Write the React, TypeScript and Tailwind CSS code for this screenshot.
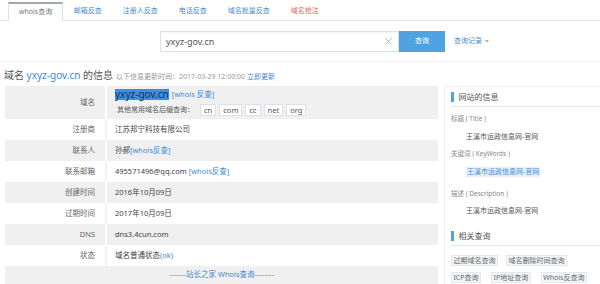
const tabs = ['邮箱反查', '注册人反查', '电话反查', '域名批量反查']

const rows: { label: string; value: React.ReactNode }[] = [
  { label: '注册商', value: '江苏邦宁科技有限公司' },
  {
    label: '联系人',
    value: (
      <>
        孙郝 <span className="text-[#3e8ad6]">[whois反查]</span>
      </>
    ),
  },
  {
    label: '联系邮箱',
    value: (
      <>
        495571496@qq.com <span className="ml-[2px] text-[#3e8ad6]">[whois反查]</span>
      </>
    ),
  },
  { label: '创建时间', value: '2016年10月09日' },
  { label: '过期时间', value: '2017年10月09日' },
  { label: 'DNS', value: 'dns3.4cun.com' },
  {
    label: '状态',
    value: (
      <>
        域名普通状态<span className="text-[#3e8ad6]">(ok)</span>
      </>
    ),
  },
]

const suffixes = ['cn', 'com', 'cc', 'net', 'org']

function PanelHeader({ title }: { title: string }) {
  return (
    <div className="flex h-[20px] items-center border-b border-[#e3e8f0] pt-[1px]">
      <span className="h-[10px] w-[2.5px] bg-[#4fa3e0]" />
      <span className="ml-[5px] text-[8px] leading-[10px] text-[#555]">{title}</span>
    </div>
  )
}

export default function App() {
  return (
    <div className="h-[284px] w-[600px] overflow-hidden bg-white font-['Noto_Sans','Noto_Sans_CJK_SC',sans-serif]">
      {/* tabs */}
      <div className="flex h-[21px] border-b border-[#dfe4ef] pl-[8px] pt-[2px]">
        <div className="-mb-px flex h-[19px] items-center border-x border-t-2 border-x-[#dde2ea] border-t-[#a3a7ad] bg-white px-[10px] text-[7px] text-[#777]">
          whois查询
        </div>
        {tabs.map((t) => (
          <div key={t} className="flex h-[18px] items-center px-[10.5px] text-[7px] text-[#4a8bd3]">
            {t}
          </div>
        ))}
        <div className="flex h-[18px] items-center px-[10.5px] text-[7px] text-[#f35555]">域名抢注</div>
      </div>

      {/* search */}
      <div className="border-b border-[#f2f2f2] pb-[9px] pt-[10px]">
        <div className="ml-[160px] flex items-center">
          <div className="flex h-[21px] w-[239px] items-center border border-[#dde2ea] pl-[5px] pr-[6px] shadow-[inset_0_1px_2px_rgba(0,0,0,0.05)]">
            <span className="flex-1 text-[9px] text-[#555]">yxyz-gov.cn</span>
            <svg width="7" height="7" viewBox="0 0 7 7">
              <path d="M0.5 0.5L6.5 6.5M6.5 0.5L0.5 6.5" stroke="#aaa" strokeWidth="0.8" />
            </svg>
          </div>
          <div className="flex h-[21px] w-[46px] items-center justify-center bg-[#4fa3e0] text-[7px] text-white">
            查询
          </div>
          <div className="ml-[9px] flex items-center text-[7px] text-[#4a8bd3]">
            查询记录
            <svg className="ml-[3px]" width="4" height="3" viewBox="0 0 4 3">
              <path d="M0 0H4L2 2.5Z" fill="#aaa" />
            </svg>
          </div>
        </div>
      </div>

      {/* title */}
      <div className="flex items-baseline pl-[4px] pt-[6px] leading-[14px]">
        <span className="text-[10px] text-[#555]">
          域名 <span className="text-[#3e8ad6]">yxyz-gov.cn</span> 的信息
        </span>
        <span className="ml-[3px] text-[7px] text-[#999]">
          以下信息更新时间：2017-03-29 12:00:00 <span className="text-[#3e8ad6]">立即更新</span>
        </span>
      </div>

      <div className="mt-[2px] flex gap-[6px] pl-[5px]">
        {/* whois table */}
        <div className="w-[433px] shrink-0">
          <div className="flex h-[33px] bg-[#f0f0f0]">
            <div className="flex w-[102px] items-center justify-end border-r-2 border-white pr-[10px] text-[7.5px] text-[#666]">
              域名
            </div>
            <div className="flex flex-col justify-center pl-[8px]">
              <div className="flex items-center">
                <span className="bg-[#3d8fe0] text-[10px] leading-[11px] text-[#13315f]">yxyz-gov.cn</span>
                <span className="ml-[3px] text-[7.5px] text-[#3e8ad6]">[whois 反查]</span>
              </div>
              <div className="mt-[4px] flex items-center">
                <span className="ml-[2px] mr-[6px] text-[7px] text-[#555]">其他常用域名后缀查询：</span>
                <div className="flex gap-[3px]">
                  {suffixes.map((s) => (
                    <span
                      key={s}
                      className="flex h-[12px] items-center border border-[#d9e1ea] bg-white px-[3px] text-[7.5px] text-[#555]"
                    >
                      {s}
                    </span>
                  ))}
                </div>
              </div>
            </div>
          </div>
          {rows.map((r, i) => (
            <div key={r.label} className={`flex h-[21px] ${i % 2 === 1 ? 'bg-[#f0f0f0]' : 'bg-white'}`}>
              <div
                className={`flex w-[102px] items-center justify-end border-r-2 pr-[10px] text-[7.5px] text-[#666] ${
                  i % 2 === 1 ? 'border-white' : 'border-[#f3f3f3]'
                }`}
              >
                {r.label}
              </div>
              <div className="flex items-center pl-[8px] text-[7.5px] text-[#444]">{r.value}</div>
            </div>
          ))}
          <div className="h-[20px] bg-[#f0f0f0] pt-[3px] text-center text-[7.5px] leading-[10px] text-[#3e8ad6]">
            -------站长之家 Whois查询--------
          </div>
        </div>

        {/* side panel */}
        <div className="h-[200px] flex-1 border-l border-t border-[#eceef2] pl-[6px]">
          <PanelHeader title="网站的信息" />
          <div className="mt-[7px] text-[6.5px] leading-[10px] text-[#888]">标题 ( Title )</div>
          <div className="ml-[15px] mt-[8px] text-[7px] leading-[10px] text-[#555]">王溪市运政信息网-官网</div>
          <div className="mt-[7px] text-[6.5px] leading-[10px] text-[#888]">关键词 ( KeyWords )</div>
          <div className="mt-[8px] flex">
            <span className="ml-[15px] bg-[#e6f0fb] px-[1px] text-[7px] leading-[10px] text-[#4a8bd6]">
              王溪市运政信息网-官网
            </span>
          </div>
          <div className="mt-[12px] text-[6.5px] leading-[10px] text-[#888]">描述 ( Description )</div>
          <div className="ml-[15px] mt-[7px] text-[7px] leading-[10px] text-[#555]">王溪市运政信息网-官网</div>
          <div className="mt-[10px]">
            <PanelHeader title="相关查询" />
          </div>
          <div className="mt-[9px] flex gap-[8px]">
            <span className="border border-[#e3e7ee] bg-[#f4f6f9] px-[1.5px] text-[7px] leading-[9px] text-[#666]">过期域名查询</span>
            <span className="border border-[#e3e7ee] bg-[#f4f6f9] px-[1.5px] text-[7px] leading-[9px] text-[#666]">域名删除时间查询</span>
          </div>
          <div className="mt-[6px] flex gap-[10px]">
            <span className="border border-[#e3e7ee] bg-[#f4f6f9] px-[1.5px] text-[7px] leading-[9px] text-[#666]">ICP查询</span>
            <span className="border border-[#e3e7ee] bg-[#f4f6f9] px-[1.5px] text-[7px] leading-[9px] text-[#666]">IP地址查询</span>
            <span className="border border-[#e3e7ee] bg-[#f4f6f9] px-[1.5px] text-[7px] leading-[9px] text-[#666]">Whois反查询</span>
          </div>
        </div>
      </div>
    </div>
  )
}
